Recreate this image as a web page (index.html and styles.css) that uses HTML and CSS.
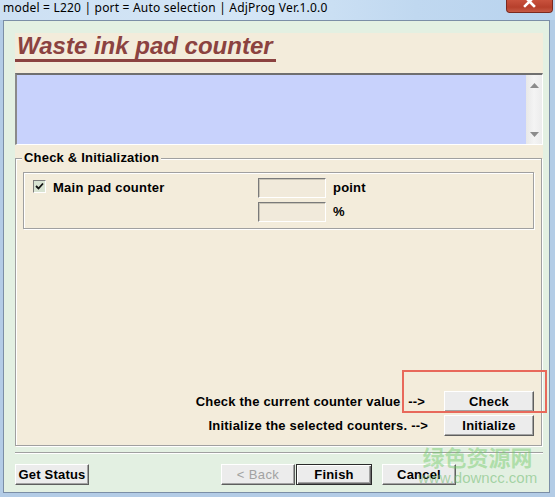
FILE: index.html
```html
<!DOCTYPE html>
<html>
<head>
<meta charset="utf-8">
<link rel="stylesheet" href="styles.css">
</head>
<body>
<div class="window">
  <div class="titlebar">
    <span class="title">model = L220 | port = Auto selection | AdjProg Ver.1.0.0</span>
    <div class="close">
      <svg width="47" height="13" viewBox="0 0 47 13"><path d="M19 -3 L28 6 M28 -3 L19 6" stroke="#fff" stroke-width="2.6" stroke-linecap="square"/></svg>
    </div>
  </div>
  <div class="client">
    <div class="panel">
      <h1 class="heading">Waste ink pad counter</h1>
      <div class="log">
        <div class="log-area"></div>
        <div class="vscroll">
          <svg width="9" height="5" viewBox="0 0 9 5"><path d="M4.5 0 L9 5 L0 5 Z" fill="#8c8c8c"/></svg>
          <svg width="9" height="5" viewBox="0 0 9 5"><path d="M0 0 L9 0 L4.5 5 Z" fill="#8c8c8c"/></svg>
        </div>
      </div>
      <div class="group">
        <div class="legend">Check &amp; Initialization</div>
        <div class="counters">
          <div class="counter-row">
            <div class="check">
              <span class="box"><svg width="9" height="9" viewBox="0 0 9 9"><path d="M1 4 L3.5 6.5 L8 1.5" stroke="#111" stroke-width="1.8" fill="none"/></svg></span>
              <span>Main pad counter</span>
            </div>
            <div class="fields">
              <div class="field"><span class="input"></span><span class="unit">point</span></div>
              <div class="field"><span class="input"></span><span class="unit">%</span></div>
            </div>
          </div>
        </div>
        <div class="actions">
          <div class="action-row"><span class="action-label wide">Check the current counter value&nbsp; --&gt;</span><button class="btn act">Check</button></div>
          <div class="action-row"><span class="action-label">Initialize the selected counters. --&gt;</span><button class="btn act">Initialize</button></div>
        </div>
        <div class="highlight"></div>
      </div>
    </div>
    <div class="separator"></div>
    <div class="footer">
      <button class="btn foot">Get Status</button>
      <div class="nav">
        <button class="btn foot disabled">&lt; Back</button>
        <button class="btn foot default">Finish</button>
        <button class="btn foot cancel">Cancel</button>
      </div>
    </div>
    <div class="watermark">
      <div class="wm-cn">绿色资源网</div>
      <div class="wm-url">www.downcc.com</div>
    </div>
  </div>
</div>
</body>
</html>
```

FILE: styles.css
```css
html, body {
  margin: 0;
  padding: 0;
}
body {
  width: 555px;
  height: 497px;
  overflow: hidden;
  background: #b3cce6;
  font-family: "Liberation Sans", Arial, sans-serif;
  color: #000;
}
.window {
  display: flex;
  flex-direction: column;
  height: 497px;
}
.titlebar {
  position: relative;
  height: 20px;
  flex: none;
  padding-left: 3px;
  background: linear-gradient(to right, #cde0f3 0%, #d4e6f6 45%, #c0d8f0 75%, #b8d3ee 100%);
  font-family: "Noto Sans", "Liberation Sans", sans-serif;
  font-size: 12px;
  line-height: 16px;
  letter-spacing: 0.2px;
  white-space: nowrap;
}
.close {
  position: absolute;
  top: 0;
  right: 2px;
  width: 45px;
  height: 12px;
  border: 1px solid #7c2a1f;
  border-top: none;
  border-radius: 0 0 4px 4px;
  background: linear-gradient(to bottom, #c9523d, #b7402c 60%, #c65a45);
  overflow: hidden;
}
.close svg {
  display: block;
  margin-left: -1px;
}
.client {
  position: relative;
  flex: 1;
  margin: 0 5px 4px 3px;
  border: 1px solid #7b8ea6;
  background: #e3f0e2;
  padding: 12px 6px 0 11px;
  display: flex;
  flex-direction: column;
}
.panel {
  background: #f3ecdb;
  height: 414px;
  display: flex;
  flex-direction: column;
  flex: none;
}
.heading {
  margin: 0;
  align-self: flex-start;
  padding: 0 3px 1px 2px;
  font: italic bold 24px/25px "Liberation Sans", Arial, sans-serif;
  color: #8b4240;
  border-bottom: 3px solid #8b4240;
}
.log {
  margin-top: 11px;
  height: 72px;
  box-sizing: border-box;
  display: flex;
  border-top: 2px solid #6f6f6f;
  border-left: 2px solid #8a8a8a;
  border-right: 1px solid #fff;
  border-bottom: 1px solid #fff;
  flex: none;
}
.log-area {
  flex: 1;
  background: #c8d2fc;
}
.vscroll {
  width: 16px;
  background: linear-gradient(to right, #e8e8e8, #f4f4f4 50%, #ececec);
  display: flex;
  flex-direction: column;
  justify-content: space-between;
  align-items: center;
  padding: 8px 0 7px;
  box-sizing: border-box;
}
.vscroll svg {
  display: block;
}
.group {
  position: relative;
  margin: 13px 1px 1px 0;
  flex: 1;
  border: 1px solid #a0a0a0;
  box-shadow: inset 1px 1px 0 #fff, 1px 1px 0 #fff;
  display: flex;
  flex-direction: column;
}
.legend {
  align-self: flex-start;
  margin: -9px 0 0 6px;
  padding: 0 2px;
  background: #f3ecdb;
  font-weight: bold;
  font-size: 13px;
  line-height: 15px;
  letter-spacing: 0.2px;
}
.counters {
  margin: 7px 7px 0 7px;
  height: 57px;
  box-sizing: border-box;
  border: 1px solid #a0a0a0;
  box-shadow: inset 1px 1px 0 #fff, 1px 1px 0 #fff;
}
.counter-row {
  display: flex;
  padding: 5px 0 0 9px;
}
.check {
  width: 225px;
  display: flex;
  align-items: flex-start;
  font-weight: bold;
  font-size: 13px;
  line-height: 20px;
  letter-spacing: 0.25px;
}
.box {
  width: 13px;
  height: 13px;
  box-sizing: border-box;
  margin: 2px 7px 0 0;
  border: 1px solid;
  border-color: #7c7c7c #fff #fff #7c7c7c;
  background: #d8e3d2;
  display: flex;
  align-items: center;
  justify-content: center;
}
.box svg {
  display: block;
}
.fields {
  display: flex;
  flex-direction: column;
  gap: 4px;
}
.field {
  display: flex;
  align-items: center;
  gap: 7px;
}
.input {
  width: 68px;
  height: 20px;
  box-sizing: border-box;
  border: 1px solid;
  border-color: #7a7a7a #fff #fff #7a7a7a;
  box-shadow: inset 1px 1px 0 #c9c4b6;
  background: #f1eadb;
}
.unit {
  font-weight: bold;
  font-size: 13px;
  line-height: 20px;
  letter-spacing: 0.2px;
}
.actions {
  margin-top: auto;
  padding: 0 7px 9px 0;
  display: flex;
  flex-direction: column;
  gap: 3px;
}
.action-row {
  display: flex;
  justify-content: flex-end;
  align-items: center;
  gap: 16px;
}
.action-label {
  font-weight: bold;
  font-size: 13px;
  line-height: 21px;
  letter-spacing: 0.2px;
  white-space: nowrap;
}
.action-label.wide {
  padding-right: 3px;
}
.btn {
  margin: 0;
  padding: 0;
  height: 21px;
  box-sizing: border-box;
  border: 1px solid;
  border-color: #fff #5e5e5e #5e5e5e #fff;
  box-shadow: inset -1px -1px 0 #a3a3a3;
  background: #ececec;
  font-family: "Liberation Sans", Arial, sans-serif;
  font-weight: bold;
  font-size: 13px;
  letter-spacing: 0.2px;
  color: #000;
}
.btn.act {
  width: 90px;
}
.highlight {
  position: absolute;
  left: 386px;
  top: 211px;
  width: 145px;
  height: 43px;
  box-sizing: border-box;
  border: 2px solid #e8695b;
}
.separator {
  margin-top: 5px;
  height: 1px;
  background: #a0a0a0;
  box-shadow: 0 1px 0 #fff;
  flex: none;
}
.footer {
  margin-top: 11px;
  display: flex;
}
.btn.foot {
  width: 74px;
}
.nav {
  margin-left: auto;
  margin-right: 87px;
  display: flex;
}
.btn.disabled {
  color: #a2a2a2;
  font-weight: normal;
  letter-spacing: 0.4px;
}
.btn.default {
  width: 76px;
  margin-left: 1px;
  border: 1px solid #2a2a2a;
  box-shadow: inset 1px 1px 0 #fff, inset -1px -1px 0 #6a6a6a, inset -2px -2px 0 #a3a3a3;
}
.btn.cancel {
  margin-left: 10px;
}
.watermark {
  position: absolute;
  left: 414px;
  top: 423px;
  pointer-events: none;
  text-align: center;
}
.wm-cn {
  font-family: "Noto Sans CJK SC", sans-serif;
  font-weight: bold;
  font-size: 22px;
  line-height: 25px;
  color: rgba(110, 200, 100, 0.45);
}
.wm-url {
  font-family: "Liberation Sans", Arial, sans-serif;
  font-size: 15px;
  line-height: 17px;
  color: rgba(110, 185, 110, 0.55);
}
```
